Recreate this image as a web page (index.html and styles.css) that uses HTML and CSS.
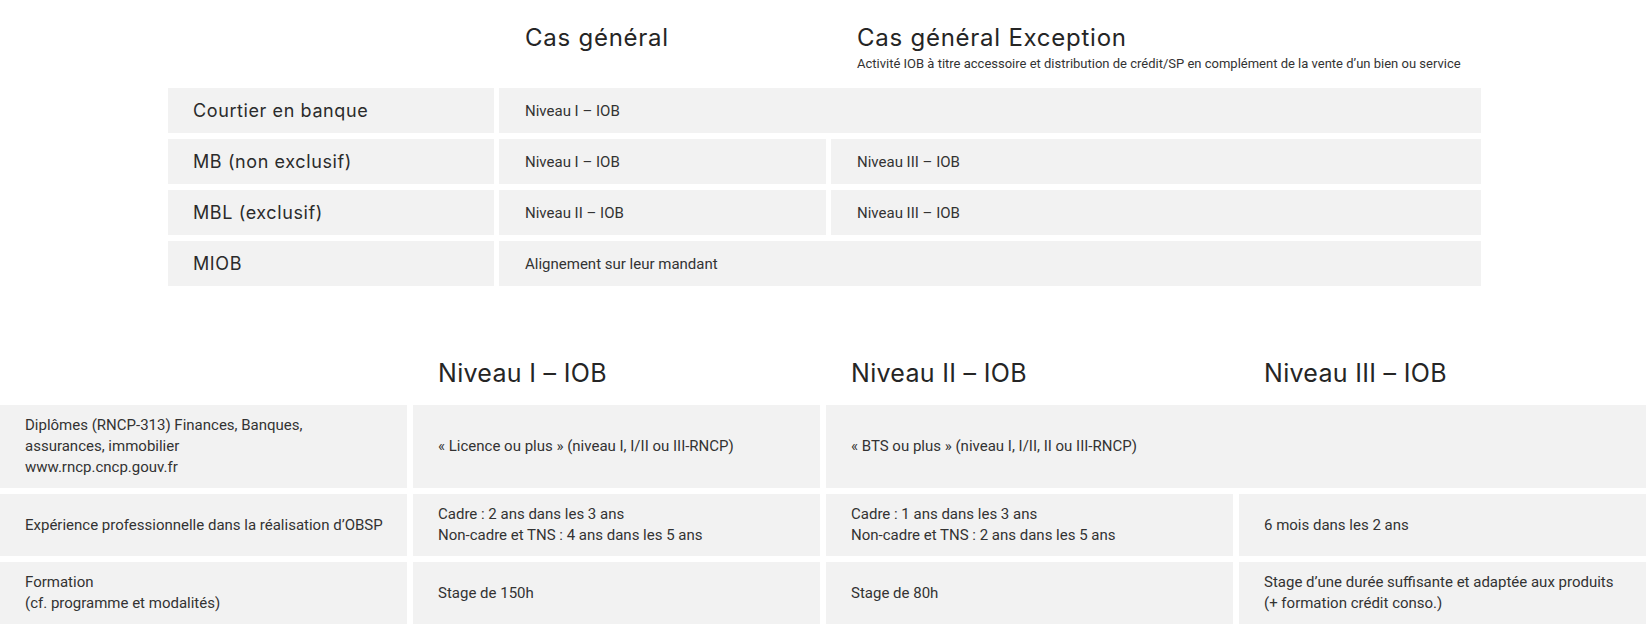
FILE: index.html
```html
<!DOCTYPE html>
<html lang="fr">
<head>
<meta charset="utf-8">
<title>Niveaux IOB</title>
<link rel="stylesheet" href="styles.css">
</head>
<body>
<section class="t1">
  <div class="t1-head"></div>
  <div class="t1-head"><h2 class="title">Cas général</h2></div>
  <div class="t1-head"><h2 class="title">Cas général Exception</h2><p class="sub">Activité IOB à titre accessoire et distribution de crédit/SP en complément de la vente d’un bien ou service</p></div>

  <div class="lab">Courtier en banque</div>
  <div class="val span2">Niveau I – IOB</div>

  <div class="lab">MB (non exclusif)</div>
  <div class="val">Niveau I – IOB</div>
  <div class="val">Niveau III – IOB</div>

  <div class="lab">MBL (exclusif)</div>
  <div class="val">Niveau II – IOB</div>
  <div class="val">Niveau III – IOB</div>

  <div class="lab">MIOB</div>
  <div class="val span2">Alignement sur leur mandant</div>
</section>

<section class="t2">
  <div class="t2-head"></div>
  <div class="t2-head"><h2 class="title">Niveau I – IOB</h2></div>
  <div class="t2-head"><h2 class="title">Niveau II – IOB</h2></div>
  <div class="t2-head"><h2 class="title">Niveau III – IOB</h2></div>

  <div class="cell">Diplômes (RNCP-313) Finances, Banques,<br>assurances, immobilier<br>www.rncp.cncp.gouv.fr</div>
  <div class="cell">«&nbsp;Licence ou plus&nbsp;» (niveau I, I/II ou III-RNCP)</div>
  <div class="cell span2">«&nbsp;BTS ou plus&nbsp;» (niveau I, I/II, II ou III-RNCP)</div>

  <div class="cell">Expérience professionnelle dans la réalisation d’OBSP</div>
  <div class="cell">Cadre&nbsp;: 2 ans dans les 3 ans<br>Non-cadre et TNS&nbsp;: 4 ans dans les 5 ans</div>
  <div class="cell">Cadre&nbsp;: 1 ans dans les 3 ans<br>Non-cadre et TNS&nbsp;: 2 ans dans les 5 ans</div>
  <div class="cell">6 mois dans les 2 ans</div>

  <div class="cell">Formation<br>(cf. programme et modalités)</div>
  <div class="cell">Stage de 150h</div>
  <div class="cell">Stage de 80h</div>
  <div class="cell">Stage d’une durée suffisante et adaptée aux produits<br>(+ formation crédit conso.)</div>
</section>
</body>
</html>
```

FILE: styles.css
```css
html, body {
  margin: 0;
  padding: 0;
  background: #ffffff;
  overflow: hidden;
}

body {
  font-family: Roboto, "Liberation Sans", sans-serif;
  color: #333333;
  width: 1650px;
}

.title {
  margin: 0;
  font-family: Inter, "Open Sans", sans-serif;
  font-weight: 400;
  color: #252525;
  white-space: nowrap;
}

/* ---------- table 1 ---------- */
.t1 {
  display: grid;
  margin-left: 168px;
  grid-template-columns: 326px 327px 650px;
  grid-template-rows: auto repeat(4, 45px);
  column-gap: 5px;
  row-gap: 6px;
}

.t1-head {
  padding: 23px 0 11px 26px;
}

.t1 .title {
  font-size: 24px;
  line-height: 29px;
  letter-spacing: 0.75px;
}

.sub {
  margin: 4px 0 0;
  font-size: 13px;
  line-height: 15px;
  color: #333333;
  white-space: nowrap;
}

.lab {
  display: flex;
  align-items: center;
  background: #f2f2f2;
  padding-left: 25px;
  font-family: Inter, "Open Sans", sans-serif;
  font-size: 18px;
  letter-spacing: 0.6px;
  color: #2b2b2b;
}

.val {
  display: flex;
  align-items: center;
  background: #f2f2f2;
  padding-left: 26px;
  font-size: 15px;
}

.span2 {
  grid-column: span 2;
}

/* ---------- table 2 ---------- */
.t2 {
  display: grid;
  margin-top: 60px;
  grid-template-columns: repeat(4, 407px);
  column-gap: 6px;
  row-gap: 6px;
}

.t2-head {
  padding: 12px 0 11px 25px;
}

.t2 .title {
  font-size: 25px;
  line-height: 30px;
  letter-spacing: 0.3px;
}

.cell {
  display: flex;
  flex-direction: column;
  justify-content: center;
  background: #f2f2f2;
  padding: 10px 10px 10px 25px;
  font-size: 15px;
  line-height: 21px;
  white-space: nowrap;
}
```
